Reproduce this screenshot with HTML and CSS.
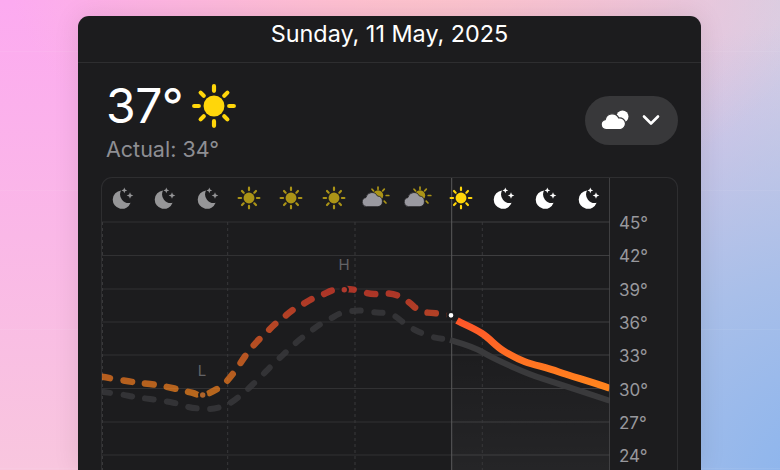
FILE: index.html
```html
<!DOCTYPE html>
<html lang="en">
<head>
  <meta charset="UTF-8" />
  <meta name="viewport" content="width=device-width, initial-scale=1" />
  <title>Weather detail</title>
  <link rel="stylesheet" href="styles.css">
</head>
<body>
  <svg class="defs" width="0" height="0" aria-hidden="true">
    <symbol id="sun" viewBox="0 0 44 44">
      <circle cx="22" cy="22" r="10" fill="currentColor" />
      <g stroke="currentColor" stroke-width="4" stroke-linecap="round">
        <path d="M22 3v4.500M22 36.500v4.500M3 22h4.500M36.500 22h4.500" />
        <path d="M9.200 9.200l3 3M31.800 31.800l3 3M9.200 34.800l3-3M31.800 12.200l3-3" />
      </g>
    </symbol>
    <symbol id="moon" viewBox="0 0 24 24">
      <path fill="currentColor" d="M11 4.500a8.700 8.700 0 0 0 9.600 12.300A9.200 9.200 0 1 1 11 4.500z" />
      <path fill="currentColor" d="M14.300 1.500l.8 2.100 2.100.8-2.100.8-.8 2.100-.8-2.100-2.100-.8 2.100-.8zM20 6.200l.9 2.400 2.400.9-2.400.9-.9 2.400-.9-2.400-2.400-.9 2.400-.9z" />
    </symbol>
    <symbol id="partly" viewBox="0 0 28 24">
      <circle cx="16" cy="9.500" r="5.200" fill="currentColor" />
      <g stroke="currentColor" stroke-width="1.700" stroke-linecap="round">
        <path d="M16 1v2.200M22.300 3.200l-1.600 1.600M26.800 9.500h-2.600M24 17l-1.800-1.800M10 3.200l1.500 1.700" />
      </g>
      <path fill="#9a99a0" stroke="#1c1c1e" stroke-width=".8" d="M4.500 20.700a4.600 4.600 0 0 1-.6-9.100 6.100 6.100 0 0 1 11.500-1.600 5.400 5.400 0 0 1 .6 10.700z" />
    </symbol>
  </svg>

  <main class="card">
    <header class="date-bar">Sunday, 11 May, 2025</header>

    <section class="summary">
      <div>
        <div class="temp-row">
          <span class="temp">37°</span>
          <svg class="temp-icon"><use href="#sun" /></svg>
        </div>
        <div class="actual">Actual: 34°</div>
      </div>
      <button class="picker" type="button" aria-label="Choose chart">
        <svg class="picker-cloud" viewBox="0 0 30 20">
          <circle cx="22.500" cy="6.500" r="6" fill="#fff" />
          <path fill="#fff" stroke="#38383a" stroke-width="1.200" d="M6 19.500a5 5 0 0 1-.8-9.900 7.200 7.200 0 0 1 13.600-1.600 5.800 5.800 0 0 1 1.700 11.500z" />
        </svg>
        <svg class="picker-chevron" viewBox="0 0 18 12">
          <path d="M2 2.500l7 7 7-7" fill="none" stroke="#fff" stroke-width="2.600" stroke-linecap="round" stroke-linejoin="round" />
        </svg>
      </button>
    </section>

    <section class="chart">
      <div class="plot">
        <svg class="plot-lines" viewBox="102 178 508 292">
          <defs>
            <linearGradient id="tempLine" gradientUnits="userSpaceOnUse" x1="0" y1="290" x2="0" y2="395">
              <stop offset="0" stop-color="#f0402c" />
              <stop offset=".35" stop-color="#ff5a28" />
              <stop offset="1" stop-color="#ff8a1c" />
            </linearGradient>
            <linearGradient id="future" gradientUnits="userSpaceOnUse" x1="0" y1="340" x2="0" y2="470">
              <stop offset="0" stop-color="#fff" stop-opacity="0" />
              <stop offset="1" stop-color="#fff" stop-opacity=".04" />
            </linearGradient>
          </defs>

          <path fill="url(#future)" d="M451.700 340L481.700 351.700L508.300 365L541.700 378.300L609.700 400.700V470H451.700z" />

          <path class="grid-h" d="M102 222H452M102 255.500H452M102 289H452M102 322H452M102 355H452M102 388.500H452M102 422H452M102 455H452" />
          <path class="grid-h-lit" d="M452 222H610M452 255.500H610M452 289H610M452 322H610M452 355H610M452 388.500H610M452 422H610M452 455H610" />
          <path class="grid-v" d="M102.500 222V470M227.700 222V470M355 222V470M482.300 222V470" />
          <path class="now-line" d="M451.700 178V470" />

          <path class="line feels dashed" d="M101.700 391.700C110 393 120 394 128.300 395.700S142 398 150 399S165 401 173.300 402.700S188 408 196.700 408.300S211 410 218.300 407.700S230 404 238.300 397.300S249 388 256.700 380.700S266 371 273.300 364S283 355 290 348.300S299 340 306.700 334.300S318 325 326.700 320.700S338 313 346.700 311.700S361 310 370 311.700S382 312 390 314S403 324 411.700 328.300S423 334 431.700 336.700S443 338 450 340" />
          <path class="line feels" d="M450 340C460 343 472 346 481.700 351.700S498 360.500 508.300 365S528 374 541.700 378.300S590 394 609.700 400.700" />

          <path class="line temp-line dashed" d="M101.700 376.700C110 378 120 380 128.300 381.300S142 383 150 384S165 386.500 173.300 388.300S185 391 191.700 392.700S197 396 202.700 395S212 392 218.300 388.300S228 380 233.300 373.300S242 360 247.300 353.300S256 342 262.700 336S272 326 279.300 320.700S290 311 298.300 306.700S310 299 319 296S328 291 335 290S352 288 363.300 292S378 293 386.700 293.300S399 296 406.700 300.700S416 311 425 312.300S437 313 443 314S449 315 451 315.300" />
          <path class="line temp-line" d="M457 320.500C465 325 472 327 481.700 333.300S495 346 505 351.700S515 358 525 361.700S545 367 558.300 371.700S592 382 609.700 388.300" />

          <circle class="peak-dot peak-low" cx="202.700" cy="395" r="2.700" />
          <circle class="peak-dot peak-high" cx="344.300" cy="289.700" r="2.700" />
          <circle class="now-dot" cx="451" cy="315.300" r="3.600" />
          <text class="marker" x="202" y="375.500">L</text>
          <text class="marker" x="344" y="269.500">H</text>
          <path class="axis-line" d="M609.700 178V470" />
        </svg>

        <div class="icon-row">
          <svg class="hour dim-moon"><use href="#moon" /></svg>
          <svg class="hour dim-moon"><use href="#moon" /></svg>
          <svg class="hour dim-moon"><use href="#moon" /></svg>
          <svg class="hour dim-sun"><use href="#sun" /></svg>
          <svg class="hour dim-sun"><use href="#sun" /></svg>
          <svg class="hour dim-sun"><use href="#sun" /></svg>
          <svg class="hour hour-wide dim-sun"><use href="#partly" /></svg>
          <svg class="hour hour-wide dim-sun"><use href="#partly" /></svg>
          <svg class="hour now-sun"><use href="#sun" /></svg>
          <svg class="hour lit-moon"><use href="#moon" /></svg>
          <svg class="hour lit-moon"><use href="#moon" /></svg>
          <svg class="hour lit-moon"><use href="#moon" /></svg>
        </div>
      </div>

      <div class="axis">
        <span>45°</span>
        <span>42°</span>
        <span>39°</span>
        <span>36°</span>
        <span>33°</span>
        <span>30°</span>
        <span>27°</span>
        <span>24°</span>
      </div>
    </section>
  </main>
</body>
</html>
```

FILE: styles.css
```css
* { box-sizing: border-box; }

html, body { height: 470px; margin: 0; overflow: hidden; }

body {
  padding: 16px 0 0 78px;
  font-family: Inter, "Liberation Sans", sans-serif;
  background:
    repeating-linear-gradient(180deg, transparent 0 51px, rgba(255,255,255,.06) 51px 52px, transparent 52px 139px),
    radial-gradient(420px 300px at 420px -70px, #ffc9c4 0%, rgba(255,201,196,0) 100%),
    radial-gradient(520px 480px at 850px 500px, #84b2ee 0%, #a9bfe9 48%, rgba(190,195,230,0) 100%),
    linear-gradient(90deg, rgba(216,205,228,0) 45%, #d8cde4 100%),
    linear-gradient(180deg, #fcaaf0 0%, #f8c6de 100%);
}

.defs { position: absolute; }

.card {
  width: 623px;
  height: 454px;
  background: #1c1c1e;
  border-radius: 11px 11px 0 0;
  box-shadow: 0 0 26px rgba(0,0,0,.1);
  color: #fff;
}

.date-bar {
  height: 47px;
  padding-top: 3px;
  border-bottom: 1px solid #2e2e30;
  font-size: 23.400px;
  line-height: 30px;
  text-align: center;
}

.summary {
  display: flex;
  justify-content: space-between;
  align-items: center;
  height: 114px;
  padding: 0 23px 0 28px;
}

.temp-row { display: flex; align-items: center; gap: 8px; height: 54px; }
.temp { font-size: 48px; line-height: 54px; letter-spacing: -.5px; }
.temp-icon { width: 46px; height: 46px; color: #ffd60a; }

.actual { margin-top: 4px; font-size: 21.500px; line-height: 24px; color: #8e8e93; }

.picker {
  display: flex;
  align-items: center;
  gap: 12px;
  width: 93px;
  height: 49px;
  padding: 0 0 0 15px;
  border: 0;
  border-radius: 25px;
  background: #38383a;
}
.picker-cloud { width: 30px; height: 20px; }
.picker-chevron { width: 18px; height: 12px; }

.chart {
  display: flex;
  height: 293px;
  margin: 0 23px;
  border: 1px solid #2e2e30;
  border-bottom: 0;
  border-radius: 11px 11px 0 0;
}

.plot { position: relative; width: 508px; height: 100%; }

.plot-lines { position: absolute; top: 0; left: 0; width: 508px; height: 292px; }

.icon-row { position: relative; display: grid; grid-template-columns: repeat(12, 1fr); height: 44px; }

.hour { width: 24px; height: 24px; margin: 8px auto 0; transform: translateX(-1px); }
.hour-wide { width: 28px; }
.dim-moon { color: #969698; }
.dim-sun { color: #ab9417; }
.now-sun { color: #ffd60a; }
.lit-moon { color: #fff; }

.grid-h { stroke: #313133; stroke-width: 1; fill: none; }
.grid-h-lit { stroke: #3e3e40; stroke-width: 1; fill: none; }
.grid-v { stroke: #38383a; stroke-width: 1; stroke-dasharray: 3 3; fill: none; }
.now-line { stroke: #5a5a5c; stroke-width: 1; fill: none; }
.axis-line { stroke: #48484a; stroke-width: 1; fill: none; }

.line { fill: none; stroke-width: 7; stroke-linejoin: round; }
.dashed { stroke-width: 6.500; stroke-linecap: round; stroke-dasharray: 8.500 13.500; opacity: .68; }
.temp-line { stroke: url(#tempLine); }
.feels { stroke: #3a3a3c; stroke-width: 6; }
.feels.dashed { opacity: .8; }

.now-dot { fill: #fff; stroke: #1c1c1e; stroke-width: 2.500; }

.peak-dot { stroke: #1c1c1e; stroke-width: 4; paint-order: stroke; }
.peak-low { fill: #b0642a; }
.peak-high { fill: #b03a2e; }

.marker { fill: #636366; font-size: 15px; text-anchor: middle; }

.axis {
  display: grid;
  grid-auto-rows: 33.300px;
  align-items: center;
  flex: 1;
  padding: 28.400px 0 0 9px;
  font-size: 17px;
  color: #98989d;
}
```
